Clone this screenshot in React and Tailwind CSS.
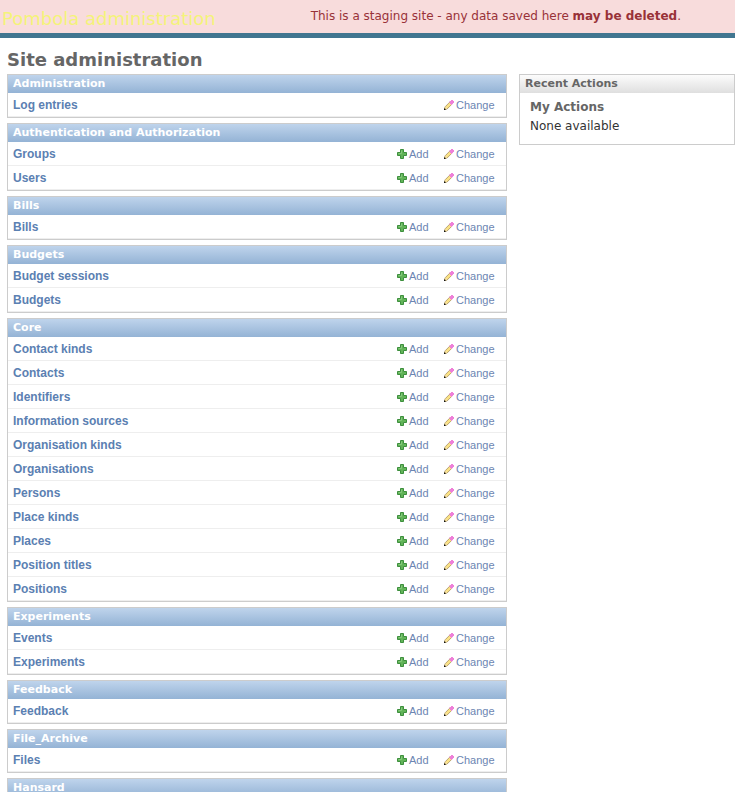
import React from "react";

const modules = [
  { name: "Administration", rows: ["Log entries"], readOnly: true },
  { name: "Authentication and Authorization", rows: ["Groups", "Users"] },
  { name: "Bills", rows: ["Bills"] },
  { name: "Budgets", rows: ["Budget sessions", "Budgets"] },
  {
    name: "Core",
    rows: [
      "Contact kinds",
      "Contacts",
      "Identifiers",
      "Information sources",
      "Organisation kinds",
      "Organisations",
      "Persons",
      "Place kinds",
      "Places",
      "Position titles",
      "Positions",
    ],
  },
  { name: "Experiments", rows: ["Events", "Experiments"] },
  { name: "Feedback", rows: ["Feedback"] },
  { name: "File_Archive", rows: ["Files"] },
  { name: "Hansard", rows: [] },
];

function AddIcon() {
  return (
    <svg width="10" height="10" viewBox="0 0 10 10" aria-hidden="true" className="shrink-0">
      <path d="M3.5 .5h3v3h3v3h-3v3h-3v-3h-3v-3h3z" fill="#62b458" stroke="#3d8f3d" />
      <path d="M4.5 1.5v3h-3" fill="none" stroke="#84c97a" />
    </svg>
  );
}

function ChangeIcon() {
  return (
    <svg width="10" height="10" viewBox="0 0 10 10" aria-hidden="true" className="shrink-0">
      <path d="M.5 9.5 1 6.9 6.2 1.7 8.3 3.8 3.1 9z" fill="#fbe285" stroke="#a89058" strokeWidth=".8" />
      <path d="M5.6 1 7 1V0H9V1H10V3H9V4H8V5H7V4H6V3H5.6z" fill="#ee80d8" />
      <path d="M1.3 7 3 8.7" stroke="#f3e2c0" />
      <path d="M0 10V8l2 2z" fill="#111" />
    </svg>
  );
}

function ActionLink({ icon, children }) {
  return (
    <a href="#" className="flex items-center gap-0.5 text-[11px] leading-4 text-[#6c85b2]">
      {icon}
      {children}
    </a>
  );
}

function Module({ name, rows, readOnly }) {
  return (
    <div className="border border-[#ccc] bg-white">
      <table className="w-full table-fixed border-separate border-spacing-0 font-['Liberation_Sans',Arial,sans-serif]">
        <caption className="h-[18px] bg-linear-to-b from-[#bfd4ec] to-[#94b3d5] px-[5px] text-left font-['DejaVu_Sans',Verdana,sans-serif] text-[11px] leading-[18px] font-bold text-white">
          <a href="#">{name}</a>
        </caption>
        <tbody>
          {rows.map((row) => (
            <tr key={row} className="h-6">
              <th scope="row" className="border-b border-[#eee] p-0 pl-[5px] text-left text-xs leading-4 font-bold">
                <a href="#" className="text-[#5b80b2]">{row}</a>
              </th>
              <td className="w-[47px] border-b border-[#eee] p-0">
                {!readOnly && <ActionLink icon={<AddIcon />}>Add</ActionLink>}
              </td>
              <td className="w-[62px] border-b border-[#eee] p-0">
                <ActionLink icon={<ChangeIcon />}>Change</ActionLink>
              </td>
            </tr>
          ))}
        </tbody>
      </table>
    </div>
  );
}

export default function App() {
  return (
    <div className="h-screen overflow-hidden bg-white font-['DejaVu_Sans',Verdana,sans-serif] text-xs text-[#333]">
      <header className="flex h-[38px] items-start justify-between border-b-[5px] border-[#417690] bg-[#f8dcdc] pr-[54px] pl-0.5">
        <div className="pt-[7px] text-lg leading-6 text-[#f4f379]">Pombola administration</div>
        <p className="pt-2 leading-4 text-[#983238]">
          This is a staging site - any data saved here <strong>may be deleted</strong>.
        </p>
      </header>
      <div className="pt-[11px] pl-[7px]">
        <h1 className="text-lg leading-[22px] font-bold text-[#666]">Site administration</h1>
        <div className="flex items-start gap-3 pt-[3px]">
          <main className="flex min-w-0 flex-1 flex-col gap-[5px]">
            {modules.map((m) => (
              <Module key={m.name} {...m} />
            ))}
          </main>
          <aside className="w-[216px] border border-[#ccc] bg-white">
            <h2 className="h-[18px] bg-linear-to-b from-[#fcfcfc] to-[#dfdfdf] px-[5px] text-[11px] leading-[18px] font-bold text-[#666]">
              Recent Actions
            </h2>
            <div className="px-2.5 pt-[5px] pb-2">
              <h3 className="leading-[19px] font-bold text-[#666]">My Actions</h3>
              <p className="leading-[19px]">None available</p>
            </div>
          </aside>
        </div>
      </div>
    </div>
  );
}
